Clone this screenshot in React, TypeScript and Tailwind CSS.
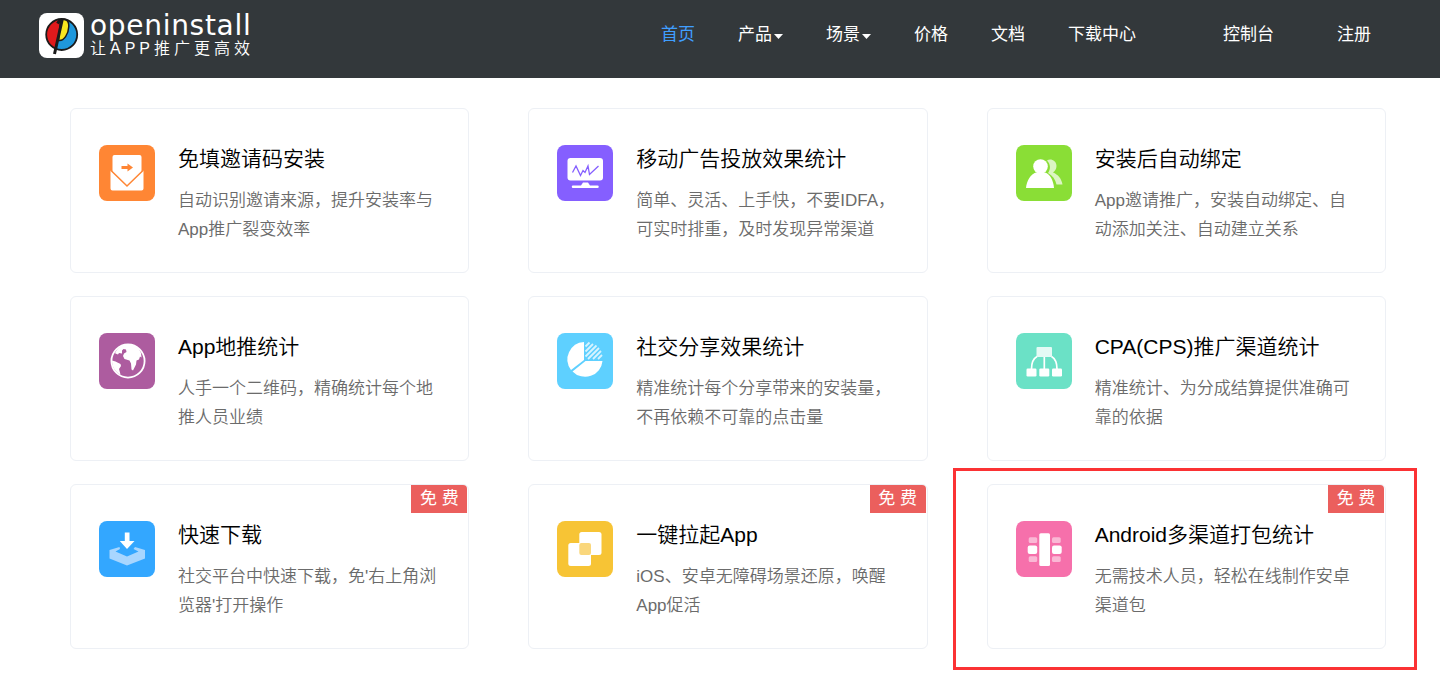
import type { ReactNode } from 'react';

interface Feature {
  title: string;
  desc: string;
  tile: string;
  icon: ReactNode;
  free?: boolean;
  highlighted?: boolean;
}

interface NavItem {
  label: string;
  className?: string;
  active?: boolean;
  menu?: boolean;
}

const NAV: NavItem[] = [
  { label: '首页', active: true },
  { label: '产品', menu: true },
  { label: '场景', menu: true },
  { label: '价格' },
  { label: '文档' },
  { label: '下载中心' },
  { label: '控制台', className: 'ml-11' },
  { label: '注册', className: 'ml-5' },
];

const FEATURES: Feature[] = [
  {
    title: '免填邀请码安装',
    desc: '自动识别邀请来源，提升安装率与App推广裂变效率',
    tile: 'bg-[#ff8634]',
    icon: (
      <>
        <path d="M15.5 10h25a2 2 0 0 1 2 2v15L28 41 13.5 27V12a2 2 0 0 1 2-2z" fill="#fff" />
        <path d="M11.5 25 28 41l16.5-16v18.5a2 2 0 0 1-2 2h-29a2 2 0 0 1-2-2z" fill="#fff" />
        <path d="M11.5 25 28 41l16.5-16" fill="none" stroke="#ff8634" strokeWidth="1.5" />
        <path d="M22.5 21h6v-2.5l5.5 4-5.5 4V24h-6z" fill="#ff8634" />
      </>
    ),
  },
  {
    title: '移动广告投放效果统计',
    desc: '简单、灵活、上手快，不要IDFA，可实时排重，及时发现异常渠道',
    tile: 'bg-[#855fff]',
    icon: (
      <>
        <rect x="10.5" y="13" width="35.5" height="22.5" rx="3" fill="#fff" />
        <path
          d="M15.5 27.5 19 21l4.5 9.5 2.5-5 2 2L31 21l1.5 8.5L41.5 21"
          fill="none"
          stroke="#855fff"
          strokeWidth="1.3"
        />
        <path d="M26 37.5h5l2 3h7.5a1.2 1.2 0 0 1 0 2.5h-24.5a1.2 1.2 0 0 1 0-2.5h8z" fill="#fff" />
      </>
    ),
  },
  {
    title: '安装后自动绑定',
    desc: 'App邀请推广，安装自动绑定、自动添加关注、自动建立关系',
    tile: 'bg-[#8ade36]',
    icon: (
      <>
        <path
          d="M31 15.5c3-2.5 9.5-.5 9.5 5.5 0 3-1.5 5-3.5 6.5 5 2 8.5 6 9.5 12h-6c-1-5-4-9-8.5-11.5 3-4 2.5-9-1-12.5z"
          fill="#fff"
          opacity=".7"
        />
        <circle cx="24.5" cy="21.5" r="7.3" fill="#fff" />
        <path d="M10 43c.5-7.5 5-14 10-15.5h9C34 29 37.5 35.5 38 43z" fill="#fff" />
      </>
    ),
  },
  {
    title: 'App地推统计',
    desc: '人手一个二维码，精确统计每个地推人员业绩',
    tile: 'bg-[#ad5c9f]',
    icon: (
      <>
        <circle cx="29" cy="28" r="16.6" fill="none" stroke="#fff" strokeWidth="1.8" />
        <path
          d="M16 20c3-6 8-9 13-9s11 3 13 9l.5 4.5-1.5-1-1 3-2.5 1-.5 4-3 6-1.5-1-.5-6-1.5-3-5-1.5-1.5-3 1-2.5 2.5-1.5-.5-2.5-2.5-.5-1.5 1.5v3l-3-.5-1 1.5-2.5-1z"
          fill="#fff"
        />
        <path d="M13 27.5l3.5 1 5 2.5.5 2-2 3 1.5 5.5c-5.5-2.5-8.5-8-8.5-14z" fill="#fff" />
      </>
    ),
  },
  {
    title: '社交分享效果统计',
    desc: '精准统计每个分享带来的安装量，不再依赖不可靠的点击量',
    tile: 'bg-[#5ed0ff]',
    icon: (
      <>
        <path d="M27 9v18L14 37A17.5 17.5 0 0 1 27 9z" fill="#fff" />
        <path d="M28.5 28H45.5A17.5 17.5 0 0 1 15.5 38.5z" fill="#fff" />
        <path
          d="M28.5 13.5l4-4M28.5 18.5l7.5-7.5M28.5 23.5l11-11M31 26l11-11M36 26l8-8M41 26l4-4"
          stroke="#fff"
          strokeWidth="1.8"
          opacity=".75"
        />
      </>
    ),
  },
  {
    title: 'CPA(CPS)推广渠道统计',
    desc: '精准统计、为分成结算提供准确可靠的依据',
    tile: 'bg-[#6be1c6]',
    icon: (
      <>
        <rect x="20.5" y="14" width="15.5" height="10" rx="1" fill="#fff" opacity=".82" />
        <path
          d="M21 23.5c-3.5 2-5.5 6-5.5 12.5M28.3 24v12M35.5 23.5c3.5 2 5.5 6 5.5 12.5"
          fill="none"
          stroke="#fff"
          strokeWidth="1.7"
        />
        <rect x="10.5" y="35.5" width="10" height="8" rx="1.2" fill="#fff" />
        <rect x="23.3" y="35.5" width="10" height="8" rx="1.2" fill="#fff" />
        <rect x="36" y="35.5" width="10" height="8" rx="1.2" fill="#fff" />
      </>
    ),
  },
  {
    title: '快速下载',
    desc: "社交平台中快速下载，免'右上角浏览器'打开操作",
    tile: 'bg-[#33a7ff]',
    free: true,
    icon: (
      <>
        <path d="M20.5 26 10.5 29v8.5l17.5 7 18-7V29l-10-3-1.5 2 5 2.5-11.5 5-11.5-5 4.5-2.5z" fill="#a8d6ff" />
        <path d="M25.8 11.5h4.7V20h5L28 28 20.8 20h5z" fill="#fff" />
      </>
    ),
  },
  {
    title: '一键拉起App',
    desc: 'iOS、安卓无障碍场景还原，唤醒App促活',
    tile: 'bg-[#f7c435]',
    free: true,
    icon: (
      <>
        <rect x="22.3" y="11" width="22.2" height="23" rx="2.5" fill="#fff" />
        <rect x="11.3" y="22" width="22.7" height="23" rx="2.5" fill="#fff" />
        <rect x="22.3" y="22" width="11.7" height="12" rx="2" fill="#fad77c" />
      </>
    ),
  },
  {
    title: 'Android多渠道打包统计',
    desc: '无需技术人员，轻松在线制作安卓渠道包',
    tile: 'bg-[#f670ab]',
    free: true,
    highlighted: true,
    icon: (
      <>
        <rect x="23.3" y="12.3" width="10.7" height="32.7" rx="1.5" fill="#fff" />
        <rect x="11.7" y="24.5" width="9.5" height="8.5" rx="2" fill="#fff" />
        <rect x="36" y="24.5" width="9.7" height="8.5" rx="2" fill="#fff" />
        <g fill="#fff" opacity=".5">
          <rect x="12.7" y="16.3" width="8.5" height="5.7" rx="1.5" />
          <rect x="36" y="16.3" width="8.7" height="5.7" rx="1.5" />
          <rect x="12.7" y="35.3" width="8.5" height="5.7" rx="1.5" />
          <rect x="36" y="35.3" width="8.7" height="5.7" rx="1.5" />
        </g>
      </>
    ),
  },
];

function LogoMark() {
  return (
    <svg viewBox="0 0 45 45" className="size-[45px] shrink-0" aria-hidden="true">
      <rect width="45" height="45" rx="8" fill="#fff" />
      <circle cx="22.7" cy="21.5" r="15.5" fill="#1f98dc" />
      <path d="M22.7 6a15.5 15.5 0 0 0-5.5 30L24 6z" fill="#e01a1c" />
      <path
        d="M21.5 7.5c4-3 8.5-.5 8.3 6C29.5 21 25 28.5 19.5 27.5z"
        fill="#f8e71f"
        stroke="#1b1b1b"
        strokeWidth="1.5"
      />
      <circle cx="22.7" cy="21.5" r="15.5" fill="none" stroke="#1b1b1b" strokeWidth="1.8" />
      <path d="M18.5 10.5c1.5-2.5 3.5-3.5 4.5-3L15.5 41" fill="none" stroke="#1b1b1b" strokeWidth="3" />
    </svg>
  );
}

function Header() {
  return (
    <header className="flex h-[78px] items-start justify-between bg-[#33383b] pr-[69px] pl-[39px] font-normal text-white">
      <a href="#" className="flex gap-1.5 pt-[13px]">
        <LogoMark />
        <span className="flex flex-col">
          <span className="font-['DejaVu_Sans',sans-serif] text-[28px] leading-[26px] tracking-wide">openinstall</span>
          <span className="text-base leading-5 font-[350] tracking-[4px]">让APP推广更高效</span>
        </span>
      </a>
      <nav className="flex gap-[43px] pt-[23px] text-[17px] leading-6">
        {NAV.map(({ label, className = '', active, menu }) => (
          <a
            key={label}
            href="#"
            className={`flex items-center gap-0.5 whitespace-nowrap ${active ? 'text-[#409eff]' : ''} ${className}`}
          >
            {label}
            {menu && (
              <svg viewBox="0 0 9 5" className="mt-0.5 h-[5px] w-[9px]" aria-hidden="true">
                <path d="M0 0h9L4.5 5z" fill="currentColor" />
              </svg>
            )}
          </a>
        ))}
      </nav>
    </header>
  );
}

function FeatureCard({ title, desc, tile, icon, free, highlighted }: Feature) {
  return (
    <article className="relative flex items-start gap-[23px] rounded-md border border-[#edf0f5] pt-9 pr-6 pb-7 pl-7">
      <div className={`size-14 shrink-0 rounded-lg ${tile}`}>
        <svg viewBox="0 0 56 56" className="size-14" aria-hidden="true">
          {icon}
        </svg>
      </div>
      <div className="min-w-0">
        <h3 className="text-[21px] leading-7 text-black">{title}</h3>
        <p className="mt-[13px] text-[17px] leading-[29px] text-[#6b6b6b]">{desc}</p>
      </div>
      {free && (
        <span className="absolute top-0 right-px flex h-7 w-14 items-center justify-center rounded-tr bg-[#eb5f5d] text-[17px] font-normal text-white">
          免 费
        </span>
      )}
      {highlighted && (
        <div className="pointer-events-none absolute -top-[17px] -right-8 -bottom-[22px] -left-[35px] border-3 border-[#fb3234]" />
      )}
    </article>
  );
}

export default function App() {
  return (
    <div className="min-h-screen bg-white font-['Liberation_Sans','Noto_Sans_CJK_SC',sans-serif] font-[350]">
      <Header />
      <main className="grid grid-cols-3 gap-x-[59px] gap-y-[23px] pt-[30px] pr-[54px] pb-7 pl-[70px]">
        {FEATURES.map((feature) => (
          <FeatureCard key={feature.title} {...feature} />
        ))}
      </main>
    </div>
  );
}
